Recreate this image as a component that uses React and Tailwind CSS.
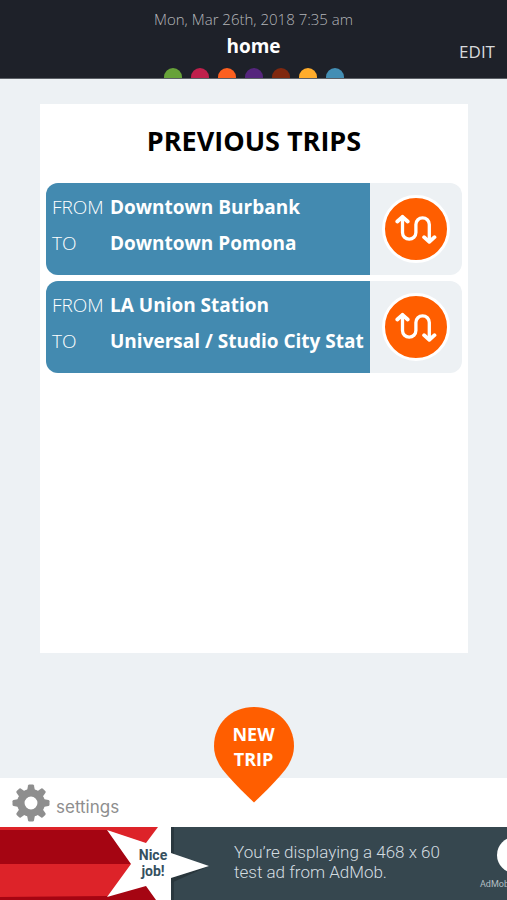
import React from "react";
import clsx from "clsx";

const LINES = [
  "bg-[#67a239]",
  "bg-[#c0204c]",
  "bg-[#fd6020]",
  "bg-[#55257d]",
  "bg-[#80280f]",
  "bg-[#ffac2b]",
  "bg-[#438eb4]",
];

const TRIPS = [
  { id: 1, from: "Downtown Burbank", to: "Downtown Pomona" },
  { id: 2, from: "LA Union Station", to: "Universal / Studio City Stat" },
];

function SwapIcon() {
  return (
    <svg viewBox="0 0 42 32" className="w-[42px] h-8" fill="none" stroke="white" strokeWidth="3.300" strokeLinecap="round" strokeLinejoin="round" aria-hidden="true">
      <path d="M7.500 4V19.500a6.700 6.700 0 0 0 13.400 0V11.500a6.700 6.700 0 0 1 13.400 0V28" />
      <path d="M2.300 8.500 7.500 3.800l5.200 4.700M29.100 24.200 34.300 28.800l5.200-4.600" strokeWidth="3.800" />
    </svg>
  );
}

function GearIcon() {
  const teeth = [0, 45, 90, 135, 180, 225, 270, 315];
  return (
    <svg viewBox="-19 -19 38 38" className="w-[38px] h-[38px]" aria-hidden="true">
      <circle r="10.200" fill="none" stroke="#8e8e8e" strokeWidth="7.500" />
      {teeth.map((deg) => (
        <path key={deg} d="M-4-12-3-17.500q.3-1 1.300-1h3.400q1 0 1.300 1L4-12z" fill="#8e8e8e" transform={`rotate(${deg})`} />
      ))}
    </svg>
  );
}

function TripRow({ trip }) {
  return (
    <li className="flex h-[92px] rounded-xl overflow-hidden bg-[#edf1f4]">
      <dl className="flex-1 min-w-0 overflow-hidden bg-[#438ab0] text-white text-[19px] leading-9 pl-[6px] pt-[6px] whitespace-nowrap">
        <div className="flex">
          <dt className="w-[58px] shrink-0 font-light">FROM</dt>
          <dd className="font-bold">{trip.from}</dd>
        </div>
        <div className="flex">
          <dt className="w-[58px] shrink-0 font-light">TO</dt>
          <dd className="font-bold">{trip.to}</dd>
        </div>
      </dl>
      <div className="w-[92px] shrink-0 flex items-center justify-center">
        <button
          aria-label={`Reverse trip from ${trip.from}`}
          className="w-[68px] h-[68px] rounded-full border-[3px] border-white bg-[#ff5e00] flex items-center justify-center"
        >
          <SwapIcon />
        </button>
      </div>
    </li>
  );
}

function AdBanner() {
  return (
    <a href="#ad" className="flex h-[73px] shrink-0 overflow-hidden bg-[#36474f] font-[Roboto,sans-serif]">
      <div className="relative w-[210px] shrink-0">
        <svg viewBox="0 0 210 73" className="w-full h-full" aria-hidden="true">
          <path d="M0 0H171V73H0z" fill="#dd2329" />
          <path d="M0 3H108L131 37H0z" fill="#a50512" />
          <path d="M0 70 108 69 146 58 160 73H0z" fill="#a50512" />
          <path d="M171 0h3v73h-3z" fill="#2a383f" />
          <path d="M171 51 209 39 171 56z" fill="#29363c" />
          <path d="M107 3 146 16 158 0H171V26L209 39 171 51V73H156L146 59 107 70 131 37z" fill="white" />
        </svg>
        <div className="absolute top-5 left-[130px] w-[46px] text-center text-sm leading-4 font-bold text-[#36505f]">
          Nice job!
        </div>
      </div>
      <p className="pl-6 pt-[15px] w-[250px] shrink-0 text-[17px] leading-5 font-light text-[#d3dce0]">
        You’re displaying a 468 x 60 test ad from AdMob.
      </p>
      <div className="flex flex-col pl-5 pt-[10px] shrink-0 text-[#b3bec3]">
        <span className="ml-[17px] w-9 h-9 rounded-full bg-white" />
        <span className="text-[9px] leading-[22px]">AdMob by Google</span>
      </div>
    </a>
  );
}

export default function App() {
  return (
    <div className="min-h-screen flex flex-col overflow-x-hidden bg-[#edf1f4] font-['Open_Sans',sans-serif]">
      <header className="relative h-[79px] shrink-0 bg-[#1e2129] border-b border-[#5c6066] flex flex-col items-center overflow-hidden">
        <time className="mt-[9px] text-[15px] leading-5 font-light text-[#b4b6b9]">Mon, Mar 26th, 2018 7:35 am</time>
        <h1 className="mt-[3px] text-[19px] leading-7 font-bold text-white">home</h1>
        <div className="mt-2 flex gap-[9px]">
          {LINES.map((color) => (
            <span key={color} className={clsx("w-[18px] h-[18px] rounded-full", color)} />
          ))}
        </div>
        <button className="absolute right-3 top-10 text-[17px] leading-6 text-[#d8dadc]">EDIT</button>
      </header>

      <main className="flex-1 flex flex-col pl-10 pr-[39px] pt-[25px] pb-[125px]">
        <section className="flex-1 bg-white px-[6px] pt-[19px]">
          <h2 className="text-center text-[27px] leading-9 font-bold text-black">PREVIOUS TRIPS</h2>
          <ul className="mt-6 flex flex-col gap-[6px]">
            {TRIPS.map((trip) => (
              <TripRow key={trip.id} trip={trip} />
            ))}
          </ul>
        </section>
      </main>

      <footer className="relative h-[49px] shrink-0 bg-white flex px-3">
        <button className="flex items-center gap-[6px] text-[#8e8e8e] font-[Inter,sans-serif]">
          <GearIcon />
          <span className="pt-2 text-[17px] leading-5">settings</span>
        </button>
        <button className="absolute left-1/2 -translate-x-1/2 -top-[71px] w-20 h-24 text-white text-lg leading-[25px] font-bold">
          <svg viewBox="0 0 80 96" className="absolute inset-0 w-full h-full" aria-hidden="true">
            <path d="M40 0C17 0 0 17 0 39c0 12 6 21 14 30 8 9 17 18 26 26.500 9-8.500 18-17.500 26-26.500 8-9 14-18 14-30C80 17 63 0 40 0z" fill="#ff5e00" />
          </svg>
          <span className="relative block -mt-4">
            NEW
            <br />
            TRIP
          </span>
        </button>
      </footer>

      <AdBanner />
    </div>
  );
}
